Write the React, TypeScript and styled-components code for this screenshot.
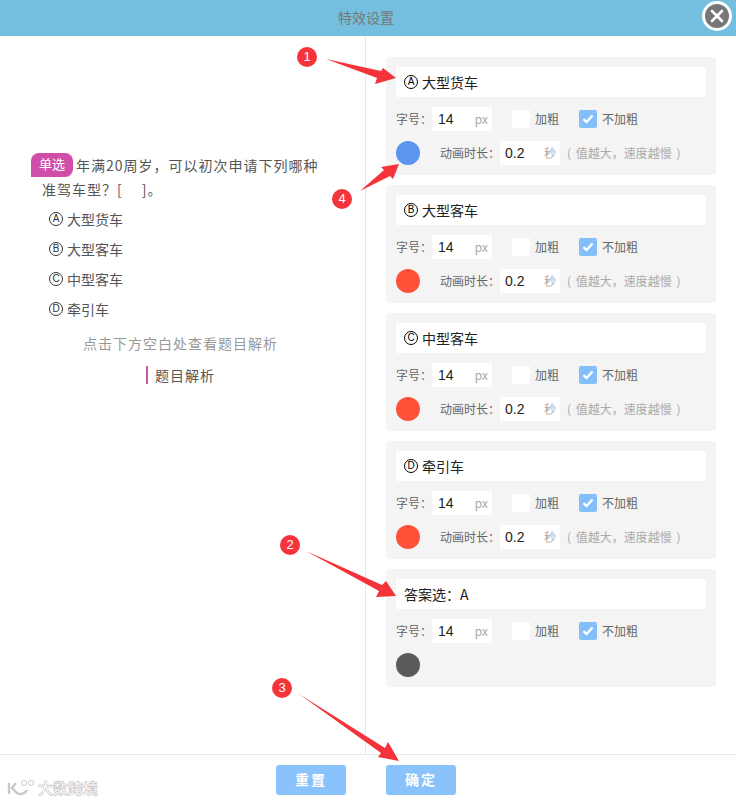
import React from "react";
import styled, { createGlobalStyle } from "styled-components";

const CJK = `"Noto Sans CJK SC", "Liberation Sans", sans-serif`;

const Global = createGlobalStyle`
  html, body { margin: 0; padding: 0; background: #fff; }
  body { font-family: ${CJK}; }
  * { box-sizing: border-box; }
`;

const Dialog = styled.div`
  position: relative;
  width: 736px;
  height: 802px;
  display: flex;
  flex-direction: column;
  overflow: hidden;
  background: #fff;
`;
const Header = styled.header`
  height: 36px;
  flex: none;
  background: #74bfe0;
  display: flex;
  align-items: center;
  justify-content: center;
  font-size: 14px;
  color: #777;
  padding-bottom: 2px;
  padding-right: 4px;
`;
const CloseButton = styled.button`
  position: absolute;
  top: 1px;
  right: 4px;
  width: 30px;
  height: 30px;
  border-radius: 50%;
  border: 3px solid #fff;
  background: #777;
  padding: 0;
  display: flex;
  align-items: center;
  justify-content: center;
`;
const Body = styled.main`
  flex: 1;
  display: flex;
  min-height: 0;
`;
const LeftPane = styled.section`
  width: 366px;
  flex: none;
  border-right: 1px solid #e8e8e8;
  padding: 117px 40px 0 31px;
`;
const QuestionLine = styled.div<{ $indent?: boolean }>`
  display: flex;
  align-items: center;
  gap: 3px;
  height: 24px;
  padding-left: ${(p) => (p.$indent ? 11 : 0)}px;
  font-size: 14px;
  letter-spacing: 1px;
  color: #555;
  white-space: nowrap;
`;
const Badge = styled.span`
  width: 42px;
  height: 24px;
  line-height: 22px;
  border-radius: 8px 8px 8px 0;
  background: #d04ea9;
  color: #fff;
  font-size: 13px;
  letter-spacing: 0;
  text-align: center;
`;
const Options = styled.ul`
  list-style: none;
  margin: 3px 0 0;
  padding: 0 0 0 18px;
`;
const Option = styled.li`
  height: 30px;
  display: flex;
  align-items: center;
  gap: 4px;
  font-size: 14px;
  color: #555;
`;
const Circled = styled.span<{ $color: string }>`
  width: 14px;
  height: 14px;
  border: 1px solid ${(p) => p.$color};
  border-radius: 50%;
  color: ${(p) => p.$color};
  font-family: "Liberation Sans", sans-serif;
  font-size: 10px;
  line-height: 12px;
  text-align: center;
  flex: none;
`;
const Hint = styled.p`
  margin: 4px 0 0;
  width: 299px;
  text-align: center;
  font-size: 14px;
  letter-spacing: 1px;
  line-height: 30px;
  color: #999;
`;
const Analysis = styled.div`
  margin: 8px 0 0 115px;
  padding-left: 7px;
  border-left: 2px solid #c85aa9;
  height: 18px;
  line-height: 18px;
  font-size: 14px;
  letter-spacing: 1px;
  color: #555;
`;
const RightPane = styled.section`
  flex: 1;
  padding: 21px 20px 0;
  display: flex;
  flex-direction: column;
  gap: 10px;
`;
const Card = styled.article`
  width: 330px;
  background: #f4f4f4;
  border-radius: 4px;
  padding: 10px;
`;
const TitleBox = styled.div`
  height: 30px;
  background: #fff;
  padding-left: 8px;
  display: flex;
  align-items: center;
  gap: 4px;
  font-size: 14px;
  color: #222;
`;
const Row = styled.div`
  display: flex;
  align-items: center;
  height: 24px;
  margin-top: 10px;
  font-size: 12px;
  color: #666;
`;
const RowText = styled.span`
  padding-bottom: 2px;
  white-space: nowrap;
`;
const SizeLabel = styled(RowText)`
  width: 36px;
`;
const Field = styled.div<{ $left: number }>`
  width: 60px;
  height: 24px;
  background: #fff;
  display: flex;
  align-items: center;
  justify-content: space-between;
  padding: 0 4px 0 ${(p) => p.$left}px;
  font-family: "Liberation Sans", sans-serif;
  font-size: 14px;
  color: #222;
`;
const Unit = styled.span`
  font-size: 12px;
  color: #aaa;
  padding-bottom: 2px;
  font-family: ${CJK};
`;
const Check = styled.span<{ $on?: boolean }>`
  width: 18px;
  height: 18px;
  border-radius: 2px;
  background: ${(p) => (p.$on ? "#85bffa" : "#fff")};
  margin: 0 5px 0 20px;
  display: flex;
  align-items: center;
  justify-content: center;
`;
const Dot = styled.span<{ $color: string }>`
  width: 24px;
  height: 24px;
  border-radius: 50%;
  background: ${(p) => p.$color};
  flex: none;
`;
const DurationLabel = styled(RowText)`
  margin-left: 20px;
  width: 60px;
`;
const Note = styled(RowText)`
  margin-left: 7px;
  color: #aaa;
  word-spacing: 2px;
`;
const Footer = styled.footer`
  height: 48px;
  flex: none;
  border-top: 1px solid #e8e8e8;
  padding: 10px 0 0 276px;
  display: flex;
  gap: 40px;
`;
const ActionButton = styled.button`
  width: 70px;
  height: 30px;
  border: 0;
  border-radius: 3px;
  background: #8ac3fb;
  color: #fff;
  font-family: ${CJK};
  font-size: 14px;
  font-weight: 700;
  letter-spacing: 2px;
  padding: 0 0 3px;
`;
const Overlay = styled.svg`
  position: absolute;
  inset: 0;
  pointer-events: none;
`;
const Marker = styled.span<{ $x: number; $y: number }>`
  position: absolute;
  left: ${(p) => p.$x}px;
  top: ${(p) => p.$y}px;
  width: 20px;
  height: 20px;
  border-radius: 50%;
  background: #f5333a;
  color: #fff;
  font-family: "Liberation Sans", sans-serif;
  font-size: 13px;
  line-height: 20px;
  text-align: center;
`;
const Watermark = styled.div`
  position: absolute;
  left: 7px;
  bottom: 5px;
  display: flex;
  align-items: center;
  gap: 1px;
`;
const WatermarkText = styled.span`
  font-size: 15px;
  line-height: 18px;
  font-weight: 700;
  color: #fff;
  -webkit-text-stroke: 0.6px #c4c4c4;
`;

const options = [
  { l: "A", t: "大型货车", c: "#5b95ee" },
  { l: "B", t: "大型客车", c: "#ff5238" },
  { l: "C", t: "中型客车", c: "#ff5238" },
  { l: "D", t: "牵引车", c: "#ff5238" },
];

const Tick = () => (
  <svg width="12" height="10" viewBox="0 0 12 10">
    <path d="M1.5 5l3 3 6-6.5" fill="none" stroke="#fff" strokeWidth="2.4" />
  </svg>
);

const SizeRow = () => (
  <Row>
    <SizeLabel>字号：</SizeLabel>
    <Field $left={6}>
      14<Unit>px</Unit>
    </Field>
    <Check />
    <RowText>加粗</RowText>
    <Check $on>
      <Tick />
    </Check>
    <RowText>不加粗</RowText>
  </Row>
);

export default function App() {
  return (
    <Dialog>
      <Global />
      <Header>特效设置</Header>
      <CloseButton aria-label="关闭">
        <svg width="14" height="14" viewBox="0 0 14 14">
          <path d="M2 2l10 10M12 2L2 12" stroke="#fff" strokeWidth="2.6" strokeLinecap="round" />
        </svg>
      </CloseButton>
      <Body>
        <LeftPane>
          <QuestionLine>
            <Badge>单选</Badge>
            <span>年满20周岁，可以初次申请下列哪种</span>
          </QuestionLine>
          <QuestionLine $indent>准驾车型？[　 ]。</QuestionLine>
          <Options>
            {options.map((o) => (
              <Option key={o.l}>
                <Circled $color="#333">{o.l}</Circled>
                {o.t}
              </Option>
            ))}
          </Options>
          <Hint>点击下方空白处查看题目解析</Hint>
          <Analysis>题目解析</Analysis>
        </LeftPane>
        <RightPane>
          {options.map((o) => (
            <Card key={o.l}>
              <TitleBox>
                <Circled $color="#000">{o.l}</Circled>
                {o.t}
              </TitleBox>
              <SizeRow />
              <Row>
                <Dot $color={o.c} />
                <DurationLabel>动画时长：</DurationLabel>
                <Field $left={5}>
                  0.2<Unit>秒</Unit>
                </Field>
                <Note>( 值越大，速度越慢 )</Note>
              </Row>
            </Card>
          ))}
          <Card>
            <TitleBox>答案选：A</TitleBox>
            <SizeRow />
            <Row>
              <Dot $color="#5a5a5a" />
            </Row>
          </Card>
        </RightPane>
      </Body>
      <Footer>
        <ActionButton>重置</ActionButton>
        <ActionButton>确定</ActionButton>
      </Footer>
      <Watermark>
        <svg width="30" height="18" viewBox="0 0 30 18">
          <path d="M2 4v11M9 4L5 9l5 5c3 2 8 1 10-3" fill="none" stroke="#c9c9c9" strokeWidth="2.4" />
          <circle cx="17" cy="4" r="2.5" fill="none" stroke="#c9c9c9" />
          <circle cx="24" cy="4" r="2.5" fill="none" stroke="#c9c9c9" />
        </svg>
        <WatermarkText>大数跨境</WatermarkText>
      </Watermark>
      <Overlay width="736" height="802" viewBox="0 0 736 802">
        <g fill="#f5333a">
          <polygon points="326,59 381,71 383,68 396,78 375,84 377,78" />
          <polygon points="360,191 384,170 381,167 399,164 393,179 390,176" />
          <polygon points="306,551 382,585 386,581 396,596 376,597 379,591" />
          <polygon points="299,694 385,748 388,742 399,761 378,757 381,753" />
        </g>
      </Overlay>
      <Marker $x={297} $y={47}>1</Marker>
      <Marker $x={280} $y={535}>2</Marker>
      <Marker $x={272} $y={678}>3</Marker>
      <Marker $x={332} $y={189}>4</Marker>
    </Dialog>
  );
}
